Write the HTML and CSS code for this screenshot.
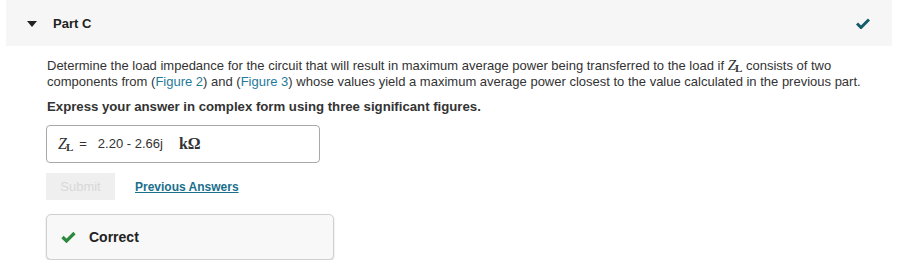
FILE: index.html
```html
<!DOCTYPE html>
<html>
<head>
<meta charset="utf-8">
<link rel="stylesheet" href="styles.css">
</head>
<body>
<div class="part">
  <div class="part-header">
    <span class="caret"></span>
    <span class="part-title">Part C</span>
    <svg class="header-check" width="14" height="11" viewBox="0 0 14 11"><path d="M1 5.5 L5 9.5 L13 1.5" fill="none" stroke="#155a6a" stroke-width="3"/></svg>
  </div>
  <div class="part-body">
    <p class="prompt">Determine the load impedance for the circuit that will result in maximum average power being transferred to the load if <span class="math"><i>Z</i><sub>L</sub></span> consists of two components from (<a class="fig">Figure 2</a>) and (<a class="fig">Figure 3</a>) whose values yield a maximum average power closest to the value calculated in the previous part.</p>
    <p class="instr">Express your answer in complex form using three significant figures.</p>
    <div class="answer">
      <span class="math"><i>Z</i><sub>L</sub></span>
      <span class="eq">=</span>
      <span class="val">2.20 - 2.66j</span>
      <span class="unit">kΩ</span>
    </div>
    <div class="actions">
      <button class="submit">Submit</button>
      <a class="prev">Previous Answers</a>
    </div>
    <div class="feedback">
      <svg class="ok" width="15" height="12" viewBox="0 0 15 12"><path d="M1.5 6 L5.5 10 L13.5 2" fill="none" stroke="#2b8a3e" stroke-width="3.2"/></svg>
      <span class="ok-text">Correct</span>
    </div>
  </div>
</div>
</body>
</html>
```
FILE: styles.css
```css
html, body {
  margin: 0;
  padding: 0;
  background: #fff;
}
body {
  font-family: "Liberation Sans", Arial, sans-serif;
  color: #333;
  font-size: 12px;
}
.part-header {
  margin: 0 5px 0 6px;
  height: 46px;
  background: #f6f6f6;
  display: flex;
  align-items: center;
  box-sizing: border-box;
  padding: 0 22px 0 21px;
}
.caret {
  width: 0;
  height: 0;
  border-left: 5px solid transparent;
  border-right: 5px solid transparent;
  border-top: 6px solid #222;
  margin-right: 16px;
  margin-top: 1px;
}
.part-title {
  font-weight: bold;
  font-size: 13px;
  color: #222;
}
.header-check {
  margin-left: auto;
  margin-top: 1px;
}
.part-body {
  padding: 12px 20px 0 46px;
}
.prompt {
  margin: 0 0 0 1px;
  font-size: 13px;
  line-height: 16px;
  max-width: 820px;
}
.math {
  font-family: "Liberation Serif", "Times New Roman", serif;
  font-size: 15px;
  line-height: 1;
  color: #333;
  white-space: nowrap;
}
.math i {
  font-style: italic;
}
.math sub {
  font-size: 11px;
  font-weight: bold;
  vertical-align: -2px;
  line-height: 0;
  margin-left: -1px;
}
.fig {
  color: #1f7a9a;
}
.instr {
  margin: 9px 0 0 1px;
  font-weight: bold;
  font-size: 13.2px;
  line-height: 16px;
  color: #333;
}
.answer {
  margin-top: 10px;
  width: 274px;
  height: 38px;
  box-sizing: border-box;
  border: 1px solid #a8a8a8;
  border-radius: 4px;
  display: flex;
  align-items: center;
  padding: 0 0 1px 11px;
}
.answer .math {
  font-size: 16px;
}
.eq {
  margin-left: 6px;
  font-size: 13px;
}
.val {
  margin-left: 11px;
  font-size: 13px;
}
.unit {
  margin-left: 16px;
  font-family: "Liberation Serif", "Times New Roman", serif;
  font-weight: bold;
  font-size: 16px;
  color: #333;
}
.actions {
  margin-top: 10px;
  display: flex;
  align-items: center;
}
.submit {
  width: 69px;
  height: 27px;
  border: none;
  background: #efefef;
  color: #d8d8d8;
  font-family: "Liberation Sans", Arial, sans-serif;
  font-size: 13px;
  padding: 0;
}
.prev {
  margin-left: 20px;
  color: #1a6f8c;
  font-weight: bold;
  font-size: 12px;
  text-decoration: underline;
}
.feedback {
  margin-top: 14px;
  width: 288px;
  height: 46px;
  box-sizing: border-box;
  border: 1px solid #d0d0d0;
  border-radius: 5px;
  background: #f8f8f8;
  box-shadow: 0 1px 2px rgba(0,0,0,0.18);
  display: flex;
  align-items: center;
  padding: 0 0 0 14px;
}
.ok-text {
  margin-left: 13px;
  font-weight: bold;
  font-size: 14px;
  color: #222;
}
```
